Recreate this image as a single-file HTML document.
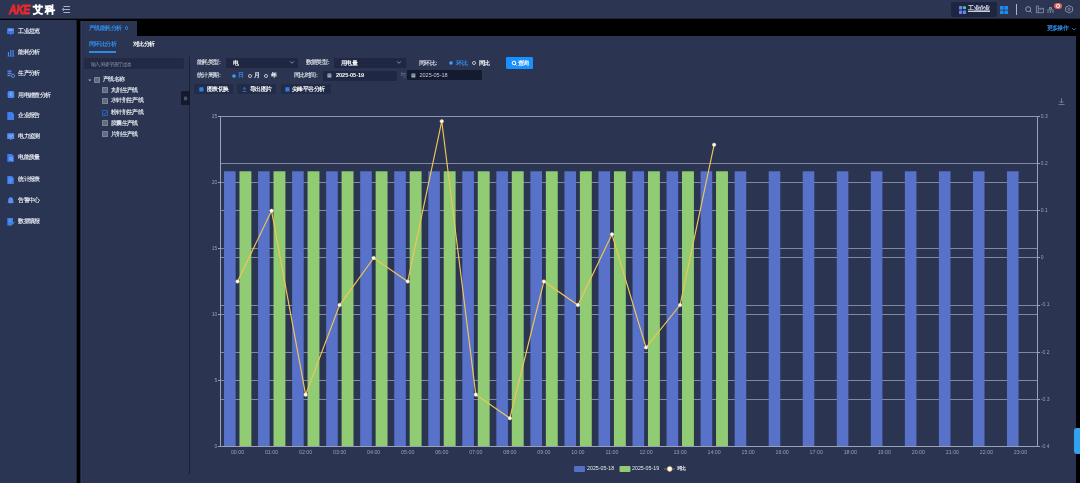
<!DOCTYPE html>
<html><head><meta charset="utf-8">
<style>
*{margin:0;padding:0;box-sizing:border-box}
html,body{width:1080px;height:483px;overflow:hidden;background:#000;font-family:"Liberation Sans",sans-serif;color:#e6e9f0}
#w{position:absolute;left:0;top:0;width:1080px;height:483px;will-change:transform;background:#000}
.a{position:absolute}
.t{position:absolute;white-space:nowrap;line-height:1}
.c{font-size:5.5px;letter-spacing:-0.6px;font-weight:bold}
#hdr{left:0;top:0;width:1080px;height:18px;background:#2c3552}
#side{left:0;top:20px;width:76px;height:463px;background:#293552}
#main{left:80px;top:36px;width:996px;height:447px;background:#2b3450}
#tabact{left:80px;top:21px;width:57px;height:15px;background:#2b3450}
.si{position:absolute;left:0;width:76px;height:12px}
.si svg{position:absolute;left:7px;top:2px}
.si .tx{position:absolute;left:18.3px;top:2.4px;color:#e3e6ee}
.lbl{color:#d6dae4}
.sel{position:absolute;background:#1f2742;border-radius:1px}
.btn{position:absolute;background:#222b48;border-radius:1px}
.cb{position:absolute;width:5.8px;height:6px;border:0.6px solid #7b8396;background:#626a7e;border-radius:0.6px}
.tr{position:absolute;color:#dde1ea;line-height:1;white-space:nowrap}
.co{font-style:normal;letter-spacing:0;margin-left:0.5px;font-size:5.8px}
.rd{position:absolute;width:3.8px;height:3.8px;border-radius:50%;border:0.7px solid #c8ccd8}
</style></head><body><div id="w">
<div id="hdr" class="a"></div><div class="a" style="left:0;top:18px;width:1080px;height:1px;background:#1e2535"></div>
<!-- logo -->
<div class="t" style="left:9px;top:2.8px;font-size:10.6px;font-weight:bold;font-style:italic;color:#e42a30;letter-spacing:-0.5px;-webkit-text-stroke:0.7px #e42a30;transform:scaleY(1.22);transform-origin:0 0">AKE</div>
<div class="t" style="left:33.2px;top:4.6px;font-size:10px;font-weight:bold;color:#fff;letter-spacing:1.7px;-webkit-text-stroke:0.5px #fff">艾科</div>
<svg class="a" style="left:61px;top:5px" width="10" height="9"><path d="M2.5 1.5H9M2.5 4.5H9M2.5 7.5H9M1.3 4.5L3 3.2M1.3 4.5L3 5.8" stroke="#b9bfd0" stroke-width="0.9" fill="none"/></svg>
<!-- header right -->
<div class="a" style="left:951.2px;top:2.4px;width:45.6px;height:14.4px;background:#1d2541;border-radius:1.5px"></div>
<svg class="a" style="left:958.8px;top:5.8px" width="8" height="8.2"><rect x="0" y="0" width="3.2" height="3.4" fill="#6b82ee" rx="0.4"/><circle cx="5.5" cy="1.7" r="1.65" fill="#49c6a4"/><rect x="0" y="4.6" width="3.2" height="3.4" fill="#6b82ee" rx="0.4"/><rect x="3.9" y="4.6" width="3.2" height="3.4" fill="#6b82ee" rx="0.4"/></svg>
<div class="t c" style="left:968.3px;top:6px;color:#e4e7ef">工业企业</div>
<div class="a" style="left:968.3px;top:11.4px;width:22px;height:0.7px;background:#c9cede"></div>
<svg class="a" style="left:1000px;top:5.5px" width="9" height="9"><rect x="0" y="0" width="3.7" height="3.7" fill="#1e8cf0" rx="0.5"/><rect x="4.4" y="0" width="3.7" height="3.7" fill="#1e8cf0" rx="0.5"/><rect x="0" y="4.4" width="3.7" height="3.7" fill="#1e8cf0" rx="0.5"/><rect x="4.4" y="4.4" width="3.7" height="3.7" fill="#1e8cf0" rx="0.5"/></svg>
<div class="a" style="left:1016px;top:4px;width:1px;height:11px;background:#aeb4c6"></div>
<svg class="a" style="left:1020px;top:0" width="60" height="18">
<circle cx="8.2" cy="9.2" r="2.5" stroke="#9aa1b6" stroke-width="0.9" fill="none"/><path d="M10 11L11.6 12.6" stroke="#9aa1b6" stroke-width="0.9"/>
<path d="M16.4 12.7V6H18.3V12.7M18.3 9.3L20.8 8V9.5L23.5 8V12.7H16" stroke="#9aa1b6" stroke-width="0.7" fill="none"/>
<path d="M29.5 7.5H31.5V9H29.5ZM27.2 10H33.8M28 11V13M30.5 11V13M33 11V13" stroke="#9aa1b6" stroke-width="0.8" fill="none"/>
<path d="M49.1 5.6L52.6 7.4V11.1L49.1 12.9L45.6 11.1V7.4Z" stroke="#9aa1b6" stroke-width="0.8" fill="none"/><circle cx="49.1" cy="9.2" r="1.2" stroke="#9aa1b6" stroke-width="0.7" fill="none"/>
</svg>
<div class="a" style="left:1053.7px;top:2.9px;width:8.5px;height:6.2px;background:#e4605a;border-radius:3.1px"></div>
<div class="a" style="left:1056.2px;top:4.2px;width:3.5px;height:3.6px;border:0.8px solid #fde8e6;border-radius:50%"></div>

<!-- sidebar -->
<div id="side" class="a"></div>
<div class="si" style="top:26px"><svg width="9" height="9"><rect x="0.3" y="0.2" width="6.6" height="5.6" fill="#5d8ff2" rx="0.6"/><rect x="0.3" y="3" width="6.6" height="2.8" fill="#3c74e8"/><path d="M2.4 5.8L3.6 7.2L4.8 5.8Z" fill="#3c74e8"/><path d="M2 2H5" stroke="#a9c6fa" stroke-width="0.5"/></svg><div class="tx c">工业总览</div></div>
<div class="si" style="top:47px"><svg width="9" height="9"><path d="M0.5 7.3H7.3" stroke="#3f73d8" stroke-width="0.8"/><rect x="0.9" y="3" width="1.2" height="4" fill="#4d86f0"/><rect x="3.2" y="1" width="1.2" height="6" fill="#4d86f0"/><rect x="5.5" y="1" width="1.2" height="6" fill="#4d86f0"/></svg><div class="tx c">能耗分析</div></div>
<div class="si" style="top:68px"><svg width="9" height="9"><rect x="0.5" y="0.5" width="4" height="1.3" fill="#5f93f2"/><rect x="0.5" y="2.7" width="4" height="1.3" fill="#5f93f2"/><rect x="0.5" y="4.9" width="3" height="1.3" fill="#5f93f2"/><circle cx="6" cy="5.8" r="1.6" stroke="#6ea0f5" stroke-width="0.8" fill="none"/></svg><div class="tx c">生产分析</div></div>
<div class="si" style="top:89.2px"><svg width="9" height="9"><rect x="0.6" y="0" width="6.6" height="7" fill="#4b8ef2" rx="1.5"/><path d="M3.9 1.8V4.8" stroke="#a6cbfb" stroke-width="0.8"/></svg><div class="tx c">用电稽查分析</div></div>
<div class="si" style="top:110px"><svg width="9" height="9"><path d="M0.3 0.1H5L7 2V8H0.3Z" fill="#3f7ef0"/></svg><div class="tx c">企业报告</div></div>
<div class="si" style="top:131px"><svg width="9" height="9"><rect x="0.2" y="0.3" width="7" height="5.8" fill="#5b8ef0" rx="0.6"/><path d="M1.7 3.8L3 2.5L4.3 3.6L5.8 2" stroke="#9fd0ff" stroke-width="0.6" fill="none"/><path d="M2.6 6.1L3.7 7.3L4.8 6.1Z" fill="#5b8ef0"/></svg><div class="tx c">电力监测</div></div>
<div class="si" style="top:151.5px"><svg width="9" height="9"><path d="M0.3 0.1H5L6.8 2V7.8H0.3Z" fill="#3f7ef0"/><circle cx="4" cy="4.7" r="1.3" stroke="#a9cbfb" stroke-width="0.6" fill="none"/><path d="M5 5.8L6.2 7" stroke="#a9cbfb" stroke-width="0.6"/></svg><div class="tx c">电能质量</div></div>
<div class="si" style="top:173.5px"><svg width="9" height="9"><path d="M0.3 0.1H5L6.8 2V8H0.3Z" fill="#3f7ef0"/><path d="M1.4 3H5.6M1.4 4.6H5.6M1.4 6.2H4" stroke="#86b2f8" stroke-width="0.5"/></svg><div class="tx c">统计报表</div></div>
<div class="si" style="top:195px"><svg width="9" height="9"><path d="M3.7 0.2C1.9 0.2 1.2 1.8 1.2 3.2V5L0.3 6H7.1L6.2 5V3.2C6.2 1.8 5.5 0.2 3.7 0.2Z" fill="#5b8ef0"/><path d="M2.8 6.6H4.6L3.7 7.3Z" fill="#5b8ef0"/></svg><div class="tx c">告警中心</div></div>
<div class="si" style="top:215.8px"><svg width="9" height="9"><path d="M0.3 0.1H6V5L3.5 7.6H0.3Z" fill="#3f7ef0"/><path d="M1.4 2H4.8M1.4 3.5H4.2" stroke="#86b2f8" stroke-width="0.5"/><path d="M3.8 7.6L7.6 3.8" stroke="#3ec6b0" stroke-width="1"/></svg><div class="tx c">数据填报</div></div>

<!-- main -->
<div id="main" class="a"></div>
<div id="tabact" class="a"></div>
<div class="a" style="left:76px;top:20px;width:1px;height:463px;background:#1c2236"></div>
<div class="a" style="left:80px;top:21px;width:1px;height:462px;background:#22243a"></div>
<div class="a" style="left:81px;top:21px;width:1px;height:462px;background:#33375a"></div>
<div class="t c" style="left:89px;top:25.8px;color:#2f8ef0">产线能耗分析</div>
<div class="a" style="left:124.5px;top:26.3px;width:3.8px;height:3.8px;border:0.7px solid #2f8ef0;border-radius:50%"></div>
<div class="t c" style="left:1046.5px;top:25.8px;color:#2f8ef0">更多操作</div>
<svg class="a" style="left:1071px;top:25.5px" width="6" height="6"><path d="M1 2L3 4L5 2" stroke="#2f8ef0" stroke-width="0.7" fill="none"/></svg>

<div class="t c" style="left:89px;top:42.3px;color:#2f8ef0;font-size:5.7px">同环比分析</div>
<div class="a" style="left:88.7px;top:51.4px;width:27px;height:1.8px;background:#2a8ce6"></div>
<div class="t c" style="left:133px;top:42.3px;color:#fff;font-size:5.7px">对比分析</div>

<!-- tree panel -->
<div class="a" style="left:84.2px;top:58.2px;width:99.8px;height:10.8px;background:#222a45;border-radius:1px"></div>
<div class="t" style="left:91px;top:61.5px;font-size:5.3px;letter-spacing:-0.6px;color:#949bb0">输入关键字进行过滤</div>
<div class="a" style="left:189px;top:57px;width:1px;height:417px;background:#1a2036"></div>
<svg class="a" style="left:87.5px;top:78.5px" width="4" height="3"><path d="M0.3 0.5L1.8 2.3L3.3 0.5Z" fill="#b0b6c6"/></svg>
<div class="cb" style="left:94px;top:76.7px"></div><div class="tr c" style="left:102.9px;top:77.3px">产线名称</div>
<div class="cb" style="left:102.1px;top:87.3px"></div><div class="tr c" style="left:110.9px;top:88px">丸剂生产线</div>
<div class="cb" style="left:102.1px;top:97.5px"></div><div class="tr c" style="left:110.9px;top:98.2px">水针剂生产线</div>
<div class="cb" style="left:102.1px;top:109.8px;border-color:#2a62b0;background:#1f3560"></div>
<svg class="a" style="left:102.1px;top:109.8px" width="6" height="6"><path d="M1.3 3.3L2.5 4.5L4.8 1.5" stroke="#4a8ae0" stroke-width="0.6" fill="none"/></svg>
<div class="tr c" style="left:110.9px;top:110.4px">粉针剂生产线</div>
<div class="cb" style="left:102.1px;top:119.9px"></div><div class="tr c" style="left:110.9px;top:120.6px">胶囊生产线</div>
<div class="cb" style="left:102.1px;top:130.8px"></div><div class="tr c" style="left:110.9px;top:131.6px">片剂生产线</div>
<div class="a" style="left:181.2px;top:90.5px;width:8.6px;height:14px;background:#141a2c"></div>
<svg class="a" style="left:181.2px;top:90.5px" width="9" height="14"><path d="M2.9 6.2H6.1M2.9 7.5H6.1M2.9 8.8H6.1" stroke="#9aa6c4" stroke-width="0.5"/></svg>

<!-- form row 1 -->
<div class="t c lbl" style="left:197px;top:60.3px">能耗类型<i class="co">:</i></div>
<div class="sel" style="left:226.3px;top:58.1px;width:71.5px;height:9.5px"></div>
<div class="t c" style="left:233px;top:60.5px;color:#fff">电</div>
<svg class="a" style="left:288.5px;top:60.3px" width="6" height="5"><path d="M1 1.3L3 3.3L5 1.3" stroke="#b0b6c8" stroke-width="0.7" fill="none"/></svg>
<div class="t c lbl" style="left:305.6px;top:60.3px">数据类型<i class="co">:</i></div>
<div class="sel" style="left:334.4px;top:58.1px;width:71.7px;height:9.5px"></div>
<div class="t c" style="left:341px;top:60.5px;color:#fff">用电量</div>
<svg class="a" style="left:396.3px;top:60.3px" width="6" height="5"><path d="M1 1.3L3 3.3L5 1.3" stroke="#b0b6c8" stroke-width="0.7" fill="none"/></svg>
<div class="t c lbl" style="left:418.8px;top:60.5px">同环比<i class="co">:</i></div>
<div class="a" style="left:449.2px;top:61.2px;width:3.8px;height:3.8px;border-radius:50%;border:0.9px solid #2a7fdc;background:#5aa6f5"></div>
<div class="t c" style="left:456.4px;top:60.5px;color:#2f8ef0">环比</div>
<div class="rd" style="left:472px;top:61.2px"></div>
<div class="t c" style="left:479px;top:60.5px;color:#fff">同比</div>
<div class="a" style="left:505.7px;top:56.9px;width:27.6px;height:11.7px;background:#1890ff;border-radius:1.2px"></div>
<svg class="a" style="left:510.5px;top:59.5px" width="7" height="7"><circle cx="3" cy="3" r="1.8" stroke="#fff" stroke-width="1" fill="none"/><path d="M4.3 4.3L5.6 5.6" stroke="#fff" stroke-width="1"/></svg>
<div class="t c" style="left:518px;top:60.8px;color:#fff">查询</div>

<!-- form row 2 -->
<div class="t c lbl" style="left:197px;top:73.3px">统计周期<i class="co">:</i></div>
<div class="a" style="left:232px;top:74px;width:4px;height:4px;border-radius:50%;background:#5aa6f5;border:0.9px solid #2a7fdc"></div>
<div class="t c" style="left:238px;top:73.3px;color:#2f8ef0">日</div>
<div class="rd" style="left:248px;top:74px"></div>
<div class="t c" style="left:254px;top:73.3px;color:#fff">月</div>
<div class="rd" style="left:264px;top:74px"></div>
<div class="t c" style="left:271px;top:73.3px;color:#fff">年</div>
<div class="t c lbl" style="left:293.9px;top:73.3px">同比时间<i class="co">:</i></div>
<div class="sel" style="left:322.8px;top:70.9px;width:74.4px;height:9.8px"></div>
<svg class="a" style="left:327px;top:73.3px" width="5" height="5"><rect x="0.4" y="0.6" width="4" height="4" fill="#a3aabd" rx="0.4"/><path d="M0.6 2H4.2" stroke="#1f2742" stroke-width="0.4"/></svg>
<div class="t" style="left:336px;top:73.3px;font-size:5.6px;font-weight:bold;color:#fff;letter-spacing:-0.05px">2025-05-19</div>
<div class="t c" style="left:400px;top:73.3px;color:#7f879c;font-weight:normal">与</div>
<div class="sel" style="left:406.7px;top:70.2px;width:75px;height:10.3px;background:#141b31"></div>
<svg class="a" style="left:411px;top:73.3px" width="5" height="5"><rect x="0.4" y="0.6" width="4" height="4" fill="#a3aabd" rx="0.4"/><path d="M0.6 2H4.2" stroke="#141b31" stroke-width="0.4"/></svg>
<div class="t" style="left:419.5px;top:73.3px;font-size:5.6px;color:#c3c8d4;letter-spacing:-0.05px">2025-05-18</div>

<!-- form row 3 -->
<div class="btn" style="left:194.4px;top:83.7px;width:38.4px;height:10.5px"></div>
<svg class="a" style="left:198.5px;top:86.5px" width="5" height="5"><rect x="0.3" y="0.3" width="4.2" height="4.2" fill="#2f7fe0" rx="0.5"/></svg>
<div class="t c" style="left:207px;top:86.5px;color:#fff">图表切换</div>
<div class="btn" style="left:237.4px;top:83.7px;width:38.9px;height:10.5px"></div>
<svg class="a" style="left:242px;top:86.5px" width="5" height="5"><path d="M2.4 0.4V3.2M1 1.8L2.4 0.4L3.8 1.8M0.6 4.4H4.2" stroke="#2f7fe0" stroke-width="0.8" fill="none"/></svg>
<div class="t c" style="left:250px;top:86.5px;color:#fff">导出图片</div>
<div class="btn" style="left:280.6px;top:83.7px;width:50.5px;height:10.5px"></div>
<svg class="a" style="left:285px;top:86.5px" width="5" height="5"><rect x="0.3" y="0.3" width="4.2" height="4.2" fill="#2f7fe0" rx="0.5"/></svg>
<div class="t c" style="left:292px;top:86.5px;color:#fff">尖峰平谷分析</div>

<!-- scroll handle -->
<div class="a" style="left:1074px;top:427.5px;width:8px;height:26.6px;background:#2ea3f2;border-radius:3px"></div>

<svg width="1080" height="483" style="position:absolute;left:0;top:0">
<path d="M220.5 380.50H1037.5 M220.5 314.50H1037.5 M220.5 248.50H1037.5 M220.5 182.50H1037.5 M220.5 116.50H1037.5 M220.5 399.50H1037.5 M220.5 352.50H1037.5 M220.5 305.50H1037.5 M220.5 257.50H1037.5 M220.5 210.50H1037.5 M220.5 163.50H1037.5 M220.5 116.50H1037.5" stroke="#9098b0" stroke-width="1" fill="none" opacity="0.85"/>
<rect x="224.02" y="171.28" width="11.6" height="275.22" fill="#5772c8"/>
<rect x="239.47" y="171.28" width="11.9" height="275.22" fill="#91cc75"/>
<rect x="258.06" y="171.28" width="11.6" height="275.22" fill="#5772c8"/>
<rect x="273.51" y="171.28" width="11.9" height="275.22" fill="#91cc75"/>
<rect x="292.10" y="171.28" width="11.6" height="275.22" fill="#5772c8"/>
<rect x="307.55" y="171.28" width="11.9" height="275.22" fill="#91cc75"/>
<rect x="326.15" y="171.28" width="11.6" height="275.22" fill="#5772c8"/>
<rect x="341.60" y="171.28" width="11.9" height="275.22" fill="#91cc75"/>
<rect x="360.19" y="171.28" width="11.6" height="275.22" fill="#5772c8"/>
<rect x="375.64" y="171.28" width="11.9" height="275.22" fill="#91cc75"/>
<rect x="394.23" y="171.28" width="11.6" height="275.22" fill="#5772c8"/>
<rect x="409.68" y="171.28" width="11.9" height="275.22" fill="#91cc75"/>
<rect x="428.27" y="171.28" width="11.6" height="275.22" fill="#5772c8"/>
<rect x="443.72" y="171.28" width="11.9" height="275.22" fill="#91cc75"/>
<rect x="462.31" y="171.28" width="11.6" height="275.22" fill="#5772c8"/>
<rect x="477.76" y="171.28" width="11.9" height="275.22" fill="#91cc75"/>
<rect x="496.35" y="171.28" width="11.6" height="275.22" fill="#5772c8"/>
<rect x="511.80" y="171.28" width="11.9" height="275.22" fill="#91cc75"/>
<rect x="530.40" y="171.28" width="11.6" height="275.22" fill="#5772c8"/>
<rect x="545.85" y="171.28" width="11.9" height="275.22" fill="#91cc75"/>
<rect x="564.44" y="171.28" width="11.6" height="275.22" fill="#5772c8"/>
<rect x="579.89" y="171.28" width="11.9" height="275.22" fill="#91cc75"/>
<rect x="598.48" y="171.28" width="11.6" height="275.22" fill="#5772c8"/>
<rect x="613.93" y="171.28" width="11.9" height="275.22" fill="#91cc75"/>
<rect x="632.52" y="171.28" width="11.6" height="275.22" fill="#5772c8"/>
<rect x="647.97" y="171.28" width="11.9" height="275.22" fill="#91cc75"/>
<rect x="666.56" y="171.28" width="11.6" height="275.22" fill="#5772c8"/>
<rect x="682.01" y="171.28" width="11.9" height="275.22" fill="#91cc75"/>
<rect x="700.60" y="171.28" width="11.6" height="275.22" fill="#5772c8"/>
<rect x="716.05" y="171.28" width="11.9" height="275.22" fill="#91cc75"/>
<rect x="734.65" y="171.28" width="11.6" height="275.22" fill="#5772c8"/>
<rect x="768.69" y="171.28" width="11.6" height="275.22" fill="#5772c8"/>
<rect x="802.73" y="171.28" width="11.6" height="275.22" fill="#5772c8"/>
<rect x="836.77" y="171.28" width="11.6" height="275.22" fill="#5772c8"/>
<rect x="870.81" y="171.28" width="11.6" height="275.22" fill="#5772c8"/>
<rect x="904.85" y="171.28" width="11.6" height="275.22" fill="#5772c8"/>
<rect x="938.90" y="171.28" width="11.6" height="275.22" fill="#5772c8"/>
<rect x="972.94" y="171.28" width="11.6" height="275.22" fill="#5772c8"/>
<rect x="1006.98" y="171.28" width="11.6" height="275.22" fill="#5772c8"/>
<path d="M220.5 116.5V446.5M1037.5 116.5V446.5M220.5 446.5H1037.5" stroke="#9aa2b9" stroke-width="1" fill="none"/>
<path d="M218.0 446.50H220.5 M218.0 380.50H220.5 M218.0 314.50H220.5 M218.0 248.50H220.5 M218.0 182.50H220.5 M218.0 116.50H220.5 M1037.5 446.50H1040.0 M1037.5 399.50H1040.0 M1037.5 352.50H1040.0 M1037.5 305.50H1040.0 M1037.5 257.50H1040.0 M1037.5 210.50H1040.0 M1037.5 163.50H1040.0 M1037.5 116.50H1040.0" stroke="#9aa2b9" stroke-width="1" fill="none"/>
<g font-family="Liberation Sans, sans-serif" font-size="5.3" fill="#9aa1b5"><text x="217.3" y="448.00" text-anchor="end" font-size="5">0</text><text x="217.3" y="382.00" text-anchor="end" font-size="5">5</text><text x="217.3" y="316.00" text-anchor="end" font-size="5">10</text><text x="217.3" y="250.00" text-anchor="end" font-size="5">15</text><text x="217.3" y="184.00" text-anchor="end" font-size="5">20</text><text x="217.3" y="118.00" text-anchor="end" font-size="5">25</text><text x="1040.8" y="447.90" font-size="5">-0.4</text><text x="1040.8" y="400.76" font-size="5">-0.3</text><text x="1040.8" y="353.61" font-size="5">-0.2</text><text x="1040.8" y="306.47" font-size="5">-0.1</text><text x="1040.8" y="259.33" font-size="5">0</text><text x="1040.8" y="212.19" font-size="5">0.1</text><text x="1040.8" y="165.04" font-size="5">0.2</text><text x="1040.8" y="117.90" font-size="5">0.3</text><text x="237.52" y="454" text-anchor="middle">00:00</text><text x="271.56" y="454" text-anchor="middle">01:00</text><text x="305.60" y="454" text-anchor="middle">02:00</text><text x="339.65" y="454" text-anchor="middle">03:00</text><text x="373.69" y="454" text-anchor="middle">04:00</text><text x="407.73" y="454" text-anchor="middle">05:00</text><text x="441.77" y="454" text-anchor="middle">06:00</text><text x="475.81" y="454" text-anchor="middle">07:00</text><text x="509.85" y="454" text-anchor="middle">08:00</text><text x="543.90" y="454" text-anchor="middle">09:00</text><text x="577.94" y="454" text-anchor="middle">10:00</text><text x="611.98" y="454" text-anchor="middle">11:00</text><text x="646.02" y="454" text-anchor="middle">12:00</text><text x="680.06" y="454" text-anchor="middle">13:00</text><text x="714.10" y="454" text-anchor="middle">14:00</text><text x="748.15" y="454" text-anchor="middle">15:00</text><text x="782.19" y="454" text-anchor="middle">16:00</text><text x="816.23" y="454" text-anchor="middle">17:00</text><text x="850.27" y="454" text-anchor="middle">18:00</text><text x="884.31" y="454" text-anchor="middle">19:00</text><text x="918.35" y="454" text-anchor="middle">20:00</text><text x="952.40" y="454" text-anchor="middle">21:00</text><text x="986.44" y="454" text-anchor="middle">22:00</text><text x="1020.48" y="454" text-anchor="middle">23:00</text></g>
<polyline points="237.52,281.50 271.56,210.79 305.60,394.64 339.65,305.07 373.69,257.93 407.73,281.50 441.77,121.21 475.81,394.64 509.85,418.21 543.90,281.50 577.94,305.07 611.98,234.36 646.02,347.50 680.06,305.07 714.10,144.79" fill="none" stroke="#f2c655" stroke-width="1.15"/>
<circle cx="237.52" cy="281.50" r="1.8" fill="#fffdf5" stroke="#f3d98f" stroke-width="0.4"/>
<circle cx="271.56" cy="210.79" r="1.8" fill="#fffdf5" stroke="#f3d98f" stroke-width="0.4"/>
<circle cx="305.60" cy="394.64" r="1.8" fill="#fffdf5" stroke="#f3d98f" stroke-width="0.4"/>
<circle cx="339.65" cy="305.07" r="1.8" fill="#fffdf5" stroke="#f3d98f" stroke-width="0.4"/>
<circle cx="373.69" cy="257.93" r="1.8" fill="#fffdf5" stroke="#f3d98f" stroke-width="0.4"/>
<circle cx="407.73" cy="281.50" r="1.8" fill="#fffdf5" stroke="#f3d98f" stroke-width="0.4"/>
<circle cx="441.77" cy="121.21" r="1.8" fill="#fffdf5" stroke="#f3d98f" stroke-width="0.4"/>
<circle cx="475.81" cy="394.64" r="1.8" fill="#fffdf5" stroke="#f3d98f" stroke-width="0.4"/>
<circle cx="509.85" cy="418.21" r="1.8" fill="#fffdf5" stroke="#f3d98f" stroke-width="0.4"/>
<circle cx="543.90" cy="281.50" r="1.8" fill="#fffdf5" stroke="#f3d98f" stroke-width="0.4"/>
<circle cx="577.94" cy="305.07" r="1.8" fill="#fffdf5" stroke="#f3d98f" stroke-width="0.4"/>
<circle cx="611.98" cy="234.36" r="1.8" fill="#fffdf5" stroke="#f3d98f" stroke-width="0.4"/>
<circle cx="646.02" cy="347.50" r="1.8" fill="#fffdf5" stroke="#f3d98f" stroke-width="0.4"/>
<circle cx="680.06" cy="305.07" r="1.8" fill="#fffdf5" stroke="#f3d98f" stroke-width="0.4"/>
<circle cx="714.10" cy="144.79" r="1.8" fill="#fffdf5" stroke="#f3d98f" stroke-width="0.4"/>
<rect x="574" y="466" width="11" height="6" rx="1" fill="#5470c6"/>
<rect x="619.5" y="466" width="11" height="6" rx="1" fill="#91cc75"/>
<path d="M664 469H675" stroke="#fac858" stroke-width="0.6" opacity="0.7"/>
<circle cx="669.7" cy="469" r="2.4" fill="#fff" stroke="#fac858" stroke-width="0.6"/>
<g font-family="Liberation Sans, sans-serif" font-size="5.3" fill="#e8ebf2"><text x="587" y="470.2">2025-05-18</text><text x="632" y="470.2">2025-05-19</text><text x="677" y="470.2" font-weight="bold" letter-spacing="-0.6">环比</text></g>
<path d="M1061.5 98V103M1059.5 101L1061.5 103L1063.5 101M1058.5 104.5H1064.5" stroke="#7f88a3" stroke-width="0.8" fill="none"/>
</svg>
</div></body></html>
